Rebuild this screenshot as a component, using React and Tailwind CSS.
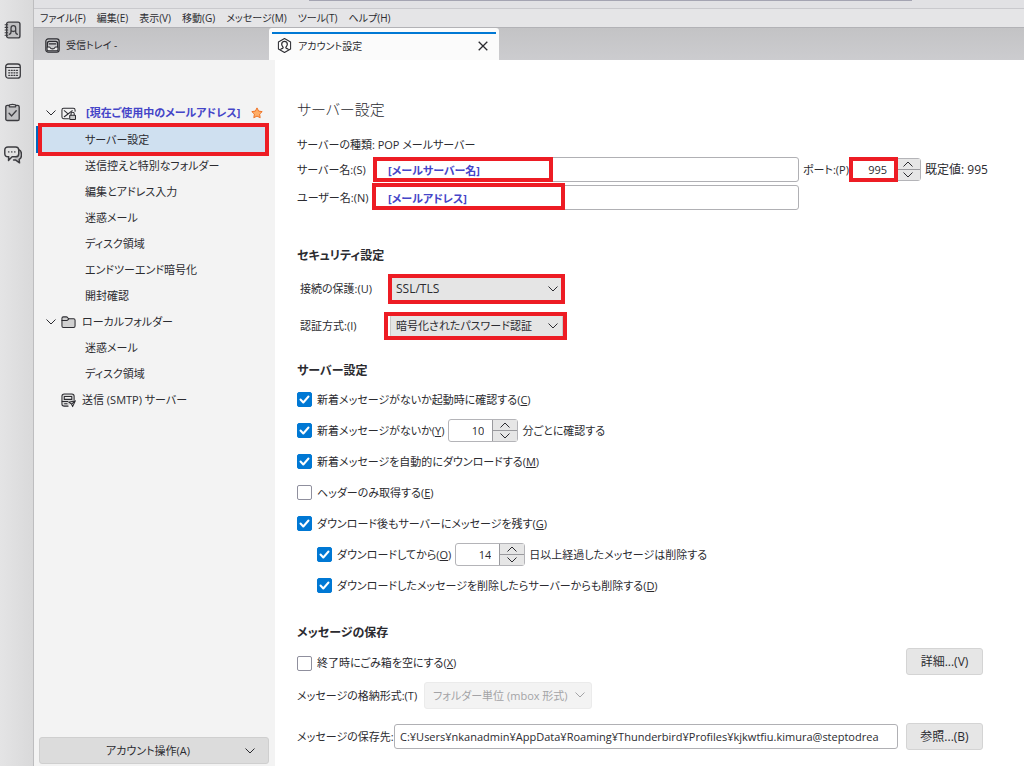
import React from "react";

const menus = ["ファイル(F)", "編集(E)", "表示(V)", "移動(G)", "メッセージ(M)", "ツール(T)", "ヘルプ(H)"];

const accountPages = [
  "送信控えと特別なフォルダー",
  "編集とアドレス入力",
  "迷惑メール",
  "ディスク領域",
  "エンドツーエンド暗号化",
  "開封確認",
];

const localPages = ["迷惑メール", "ディスク領域"];

function Chevron({ className = "", up = false }) {
  return (
    <svg viewBox="0 0 12 8" className={`h-2 w-3 shrink-0 ${className}`} fill="none" stroke="currentColor" strokeWidth="1" aria-hidden="true">
      <path d={up ? "M1.5 6.5 6 2l4.5 4.5" : "M1.5 1.5 6 6l4.5-4.5"} />
    </svg>
  );
}

function Icon({ children, className = "size-[15px]" }) {
  return (
    <svg
      viewBox="0 0 16 16"
      className={`shrink-0 ${className}`}
      fill="none"
      stroke="currentColor"
      strokeWidth="1.1"
      strokeLinecap="round"
      strokeLinejoin="round"
      aria-hidden="true"
    >
      {children}
    </svg>
  );
}

function AddressBookIcon() {
  return (
    <Icon className="h-[18px] w-[17px]">
      <rect x="2.5" y=".6" width="12.5" height="14.8" rx="1.8" fill="#c0c0c2" strokeWidth="1.3" />
      <path d="M1 3h2.5M1 5.5h2.5M1 8h2.5M1 10.5h2.5M1 13h2.500" strokeWidth="1" />
      <path d="M5 12c1.500 0 1.600-1.200 1.600-2.500V6.300c0-1.500.8-2.500 2.200-2.500S11 4.800 11 6.300v3.200c0 1.300.1 2.500 1.600 2.500M7 8.800c1 .7 2.600.7 3.600 0" strokeWidth="1.200" />
    </Icon>
  );
}

function CalendarIcon() {
  return (
    <Icon className="size-4">
      <rect x=".7" y="1" width="14.600" height="14.200" rx="2.800" fill="#dcdcde" strokeWidth="1.300" />
      <path d="M1 4.500h14" />
      <path d="M3.700 7.300h1M6.300 7.300h1M8.900 7.300h1M11.500 7.300h1M3.700 9.800h1M6.300 9.800h1M8.900 9.800h1M11.500 9.800h1M3.700 12.300h1M6.300 12.300h1M8.900 12.300h1M11.500 12.300h1" strokeWidth="1.200" />
    </Icon>
  );
}

function TasksIcon() {
  return (
    <Icon className="h-[19px] w-[17px]">
      <rect x="1.700" y="1.300" width="12.600" height="14.200" rx="1.500" fill="#c0c0c2" strokeWidth="1.300" />
      <path d="M5 2.700V1.500C5 .6 6 .3 8 .3s3 .3 3 1.200v1.200z" fill="#e2e2e2" />
      <path d="m4.800 8.700 2.400 2.500 4.300-4.900" strokeWidth="1.300" />
    </Icon>
  );
}

function ChatIcon() {
  return (
    <Icon className="size-[18px]">
      <path d="M13.500 3.500c1.300.7 2 1.900 2 3.500v1.500c0 1.700-.8 2.800-2 3.400l.3 3.100-3.600-2.600H8.500" fill="#c0c0c2" strokeWidth="1.300" />
      <path d="M3.500.8h6.800c1.700 0 2.800 1.100 2.800 2.800v3.200c0 1.700-1.100 2.800-2.800 2.800H7.200L4 12.800 4.200 9.600H3.500C1.800 9.600.7 8.500.7 6.800V3.600C.7 1.900 1.800.8 3.500.8z" fill="#e2e2e2" strokeWidth="1.300" />
      <path d="M4 5.300h.4M6.700 5.300h.4M9.400 5.300h.4" />
    </Icon>
  );
}

function InboxIcon() {
  return (
    <Icon>
      <rect x=".9" y="1" width="14.200" height="14" rx="2.500" strokeWidth="1.300" />
      <path d="M2.200 9.500h2.300c.5 0 .8.300 1 .8.300.8 1.200 1.300 2.500 1.300s2.200-.5 2.500-1.300c.2-.5.500-.8 1-.8h2.300v2.500c0 .9-.7 1.500-1.500 1.500H3.700c-.8 0-1.500-.6-1.500-1.500z" fill="#e8e8e8" />
      <path d="M2.500 9.200V5.800c0-1.300.8-2.300 2-2.300h7c1.200 0 2 1 2 2.300v3.400M4.500 6.300h7" strokeWidth="1.300" />
    </Icon>
  );
}

function AccountIcon() {
  return (
    <Icon>
      <path d="m8 .6 6.500 3.700v7.400L8 15.400l-6.500-3.700V4.300z" />
      <path d="M4 12c.6-.8 2.600-.7 2.600-1.800 0-.8-1.600-1.500-1.600-3.500 0-1.900 1.100-3.100 3-3.100s3 1.200 3 3.100c0 2-1.600 2.700-1.600 3.500 0 1.100 2 1 2.600 1.800" strokeWidth="1.300" />
    </Icon>
  );
}

function MailLockIcon() {
  return (
    <Icon>
      <path d="M8 13.500H2.800c-1 0-1.800-.7-1.800-1.700V4.200c0-1 .8-1.700 1.800-1.700h10.400c1 0 1.800.7 1.800 1.700v1.500" />
      <path d="m3.500 5 4 3.500-4 3M7.500 8.500 12 5" />
      <rect x="9.300" y="9.800" width="6.200" height="4.500" rx=".7" fill="#c9c9c9" />
      <path d="M10.700 9.500V8.300c0-1 .7-1.600 1.700-1.600s1.700.6 1.700 1.600v1.200" />
    </Icon>
  );
}

function FolderIcon() {
  return (
    <Icon>
      <path d="M1 5V3.500c0-.9.600-1.500 1.500-1.500h3.200c.6 0 1 .2 1.300.6L8 4h5.500c.9 0 1.500.6 1.500 1.500v6.300c0 .9-.6 1.500-1.500 1.500h-11c-.9 0-1.500-.6-1.500-1.500z" fill="#d0d0d0" />
      <path d="M1 5.800h5c.8 0 1.200-.3 1.600-.8L8.300 4" />
    </Icon>
  );
}

function OutgoingIcon() {
  return (
    <Icon>
      <path d="M7.500 14H3.500C2.100 14 1 13.300 1 12V3.500C1 2.100 2 1 3.500 1h8C13 1 14 2.100 14 3.500v3.800" fill="#d6d6d6" />
      <path d="M3.500 3.800h8v3h-8z" fill="#f3f3f3" />
      <path d="M1.300 9h6M3.800 11.500h2.700" />
      <path d="m8.300 9.800 7-1.600-2.900 6.300-1.200-2.700zM11.200 11.800l4-3.500" fill="#e2e2e2" />
    </Icon>
  );
}

function Highlight({ className }) {
  return <span aria-hidden="true" className={`pointer-events-none absolute border-[#ed1c24] ${className}`} />;
}

function Check({ id, checked = false, label, accessKey }) {
  return (
    <span className="flex items-center gap-[5px]">
      <span className="relative flex size-[15px]">
        <input
          id={id}
          type="checkbox"
          defaultChecked={checked}
          className="peer size-[15px] appearance-none rounded-[2px] border border-[#8f8f9d] bg-white checked:border-[#0078d4] checked:bg-[#0078d4]"
        />
        <svg viewBox="0 0 15 15" className="pointer-events-none absolute inset-0 hidden peer-checked:block" fill="none" stroke="white" strokeWidth="2" strokeLinecap="round" strokeLinejoin="round" aria-hidden="true">
          <path d="m3.500 7.500 2.800 3 5.200-6" />
        </svg>
      </span>
      <label htmlFor={id} className="whitespace-nowrap">
        {label}(<u>{accessKey}</u>)
      </label>
    </span>
  );
}

function NumberBox({ id, value, label, children }) {
  return (
    <span className="relative flex h-[23px] w-[70px] shrink-0 rounded-[3px] border border-[#b4b4b8] bg-white">
      <input id={id} aria-label={label} inputMode="numeric" defaultValue={value} className="w-0 flex-1 bg-transparent pr-2 text-right outline-none" />
      <span className="flex w-[25px] flex-col divide-y divide-[#9a9a9e] border-l border-[#9a9a9e] bg-[#e6e6e6]">
        <button type="button" aria-label="増やす" className="flex flex-1 items-center justify-center"><Chevron up /></button>
        <button type="button" aria-label="減らす" className="flex flex-1 items-center justify-center"><Chevron /></button>
      </span>
      {children}
    </span>
  );
}

function TreeRow({ children }) {
  return (
    <li>
      <a href="#page" className="flex h-[26px] items-center pl-[51px]">{children}</a>
    </li>
  );
}

export default function App() {
  return (
    <div className="flex h-screen bg-white text-[11px] leading-4 text-[#2b2b30] [font-family:'Open_Sans','Noto_Sans_CJK_JP',sans-serif] [font-feature-settings:'palt']">
      <nav aria-label="スペース" className="flex w-[34px] shrink-0 flex-col items-center gap-6 border-r border-[#bdbdbf] bg-linear-to-r from-[#e4e4e5] to-[#d9d9da] pt-[21px] pr-2 text-[#3c3c40]">
        <button type="button" aria-label="アドレス帳"><AddressBookIcon /></button>
        <button type="button" aria-label="カレンダー"><CalendarIcon /></button>
        <button type="button" aria-label="ToDo"><TasksIcon /></button>
        <button type="button" aria-label="チャット"><ChatIcon /></button>
      </nav>

      <div className="flex min-w-0 flex-1 flex-col">
        <header className="shrink-0">
          <div className="flex h-[9px] items-start justify-center border-b border-[#c9c9cd] bg-[#e1e1e4]">
            <div className="ml-[163px] h-px w-[603px] bg-[#a4a4b2]" />
          </div>
          <nav aria-label="メニュー" className="flex h-[19px] items-center gap-[11px] border-b border-[#b2b2b6] bg-[#e5e5e7] pl-[6px] text-[10px]">
            {menus.map((m) => (
              <button key={m} type="button" className="whitespace-nowrap">{m}</button>
            ))}
          </nav>
          <div role="tablist" className="flex h-8 bg-linear-to-b from-[#c3c3c5] to-[#cccccf] text-[10px]">
            <button type="button" role="tab" aria-selected="false" className="flex w-[235px] items-center gap-[6px] pt-[2px] pl-[11px]">
              <InboxIcon />
              受信トレイ -
            </button>
            <div role="tab" aria-selected="true" className="flex w-[230px] flex-col rounded-t-[3px] bg-[#fbfbfb] px-[3px] pt-1">
              <div className="h-[2px] bg-[#0078d4]" />
              <div className="flex flex-1 items-center gap-[6px] pb-[3px] pl-[5px]">
                <AccountIcon />
                <span className="flex-1">アカウント設定</span>
                <button type="button" aria-label="閉じる" className="mr-2">
                  <svg viewBox="0 0 10 10" className="size-[10px]" stroke="currentColor" strokeWidth="1.300" aria-hidden="true">
                    <path d="m.7.7 8.600 8.600M9.300.7.7 9.300" />
                  </svg>
                </button>
              </div>
            </div>
          </div>
        </header>

        <div className="flex min-h-0 flex-1">
          <aside className="flex w-[241px] shrink-0 flex-col bg-[#f3f3f3] pt-10">
            <ul className="flex-1">
              <li>
                <a href="#account" className="flex h-[26px] items-center pl-[11px]">
                  <Chevron />
                  <span className="ml-1 flex"><MailLockIcon /></span>
                  <b className="ml-[10px] whitespace-nowrap text-[#4545c8]">[現在ご使用中のメールアドレス]</b>
                  <svg viewBox="0 0 12 12" className="mr-3 ml-auto size-3 shrink-0" fill="#ffad66" stroke="#ee7326" strokeWidth="1" strokeLinejoin="round" aria-hidden="true">
                    <path d="m6 .9 1.600 3.200 3.600.5-2.600 2.500.6 3.600L6 9.100l-3.200 1.600.6-3.600L.8 4.600l3.600-.5z" />
                  </svg>
                </a>
                <ul>
                  <li className="relative ml-[2px]">
                    <a href="#server" aria-current="page" className="mr-2 flex h-[27px] items-center border-l-2 border-[#0067c0] bg-[#cfe0f0] pl-[47px]">サーバー設定</a>
                    <Highlight className="-inset-y-[3px] right-[6px] left-[2px] border-4" />
                  </li>
                  {accountPages.map((p) => <TreeRow key={p}>{p}</TreeRow>)}
                </ul>
              </li>
              <li>
                <a href="#local" className="flex h-[26px] items-center pl-[11px]">
                  <Chevron />
                  <span className="mr-[6px] ml-1"><FolderIcon /></span>
                  ローカルフォルダー
                </a>
                <ul>{localPages.map((p) => <TreeRow key={p}>{p}</TreeRow>)}</ul>
              </li>
              <li>
                <a href="#smtp" className="flex h-[26px] items-center gap-[6px] pl-[27px]">
                  <OutgoingIcon />
                  送信 (SMTP) サーバー
                </a>
              </li>
            </ul>
            <button type="button" className="mr-[6px] mb-[2px] ml-[5px] flex h-[27px] items-center rounded-[3px] border border-[#cfcfcf] bg-[#dcdcdc] px-3">
              <span className="flex-1">アカウント操作(A)</span>
              <Chevron />
            </button>
          </aside>

          <main className="min-w-0 flex-1 overflow-hidden pt-[34px] pr-[37px] pl-[22px]">
            <h1 className="text-[15px] leading-[30px] font-light">サーバー設定</h1>
            <p className="mt-[13px] leading-[16px]">サーバーの種類: POP メールサーバー</p>

            <div className="mt-1 grid grid-cols-[76px_1fr_188px] items-center gap-y-[3px]">
              <label htmlFor="host" className="whitespace-nowrap">サーバー名:(S)</label>
              <div className="relative flex">
                <input id="host" defaultValue="[メールサーバー名]" className="h-[25px] w-full rounded-[3px] border border-[#b0b0b4] px-[14px] font-bold text-[#4545c8]" />
                <Highlight className="inset-y-0 left-0 w-[180px] border-4" />
              </div>
              <div className="flex items-center whitespace-nowrap">
                <label htmlFor="port" className="w-[52px] shrink-0 pl-1">ポート:(P)</label>
                <NumberBox id="port" value="995">
                  <Highlight className="-inset-y-[2px] right-[22px] -left-[3px] border-4" />
                </NumberBox>
                <span className="ml-1 text-xs">既定値: 995</span>
              </div>
              <label htmlFor="user" className="whitespace-nowrap">ユーザー名:(N)</label>
              <div className="relative flex">
                <input id="user" defaultValue="[メールアドレス]" className="h-[25px] w-full rounded-[3px] border border-[#b0b0b4] px-[14px] font-bold text-[#4545c8]" />
                <Highlight className="-top-[2px] bottom-0 -left-px w-[193px] border-4" />
              </div>
            </div>

            <h2 className="mt-[38px] text-xs leading-4 font-bold">セキュリティ設定</h2>
            <div className="mt-[11px] flex h-[28px] items-center pl-[3px]">
              <label htmlFor="security" className="w-[90px]">接続の保護:(U)</label>
              <div className="relative flex">
                <select id="security" className="h-[26px] w-[173px] appearance-none rounded-[3px] border border-[#c8c8c8] bg-[#e5e5e5] pl-[5px] text-xs">
                  <option>SSL/TLS</option>
                </select>
                <Chevron className="pointer-events-none absolute top-[9px] right-[4px]" />
                <Highlight className="-inset-[2px] border-4" />
              </div>
            </div>
            <div className="mt-[9px] flex h-[28px] items-center pl-[3px]">
              <label htmlFor="auth" className="w-[90px]">認証方式:(I)</label>
              <div className="relative flex">
                <select id="auth" className="h-[24px] w-[173px] appearance-none rounded-[3px] border border-[#c8c8c8] bg-[#e5e5e5] pl-[5px]">
                  <option>暗号化されたパスワード認証</option>
                </select>
                <Chevron className="pointer-events-none absolute top-[8px] right-[4px]" />
                <Highlight className="-inset-y-[2px] -right-1 -left-[6px] border-4" />
              </div>
            </div>

            <h2 className="mt-[23px] text-xs leading-4 font-bold">サーバー設定</h2>
            <div className="mt-[5px] grid auto-rows-[31px] items-center">
              <Check id="c1" checked label="新着メッセージがないか起動時に確認する" accessKey="C" />
              <div className="flex items-center gap-1">
                <Check id="c2" checked label="新着メッセージがないか" accessKey="Y" />
                <NumberBox value="10" label="確認間隔（分）" />
                <span>分ごとに確認する</span>
              </div>
              <Check id="c3" checked label="新着メッセージを自動的にダウンロードする" accessKey="M" />
              <Check id="c4" label="ヘッダーのみ取得する" accessKey="E" />
              <Check id="c5" checked label="ダウンロード後もサーバーにメッセージを残す" accessKey="G" />
              <div className="flex items-center gap-1 pl-5">
                <Check id="c6" checked label="ダウンロードしてから" accessKey="O" />
                <NumberBox value="14" label="保存日数" />
                <span>日以上経過したメッセージは削除する</span>
              </div>
              <div className="pl-5">
                <Check id="c7" checked label="ダウンロードしたメッセージを削除したらサーバーからも削除する" accessKey="D" />
              </div>
            </div>

            <h2 className="mt-[24px] text-xs leading-4 font-bold">メッセージの保存</h2>
            <div className="mt-[7px] mr-1 flex h-[27px] items-center justify-between">
              <div className="pt-[3px]"><Check id="c8" label="終了時にごみ箱を空にする" accessKey="X" /></div>
              <button type="button" className="h-[27px] w-[77px] rounded-[3px] border border-[#d4d4d4] bg-[#e6e6e6] text-xs">詳細...(V)</button>
            </div>
            <div className="mt-[7px] flex h-[27px] items-center gap-[7px]">
              <label htmlFor="store">メッセージの格納形式:(T)</label>
              <div className="relative flex">
                <select id="store" disabled className="h-[27px] w-[168px] appearance-none rounded-[3px] border border-[#ebebeb] bg-[#f3f3f3] pl-2 text-[#a3a3a6] opacity-100">
                  <option>フォルダー単位 (mbox 形式)</option>
                </select>
                <Chevron className="pointer-events-none absolute top-[9px] right-[6px] text-[#a3a3a6]" />
              </div>
            </div>
            <div className="mt-[14px] mr-1 flex h-[27px] items-center">
              <label htmlFor="path" className="w-[97px] whitespace-nowrap">メッセージの保存先:</label>
              <input id="path" readOnly defaultValue="C:¥Users¥nkanadmin¥AppData¥Roaming¥Thunderbird¥Profiles¥kjkwtfiu.kimura@steptodrea" className="h-[25px] min-w-0 flex-1 rounded-[3px] border border-[#b0b0b4] px-[5px]" />
              <button type="button" className="ml-2 h-[27px] w-[77px] rounded-[3px] border border-[#d4d4d4] bg-[#e6e6e6] text-xs">参照...(B)</button>
            </div>
          </main>
        </div>
      </div>
    </div>
  );
}
